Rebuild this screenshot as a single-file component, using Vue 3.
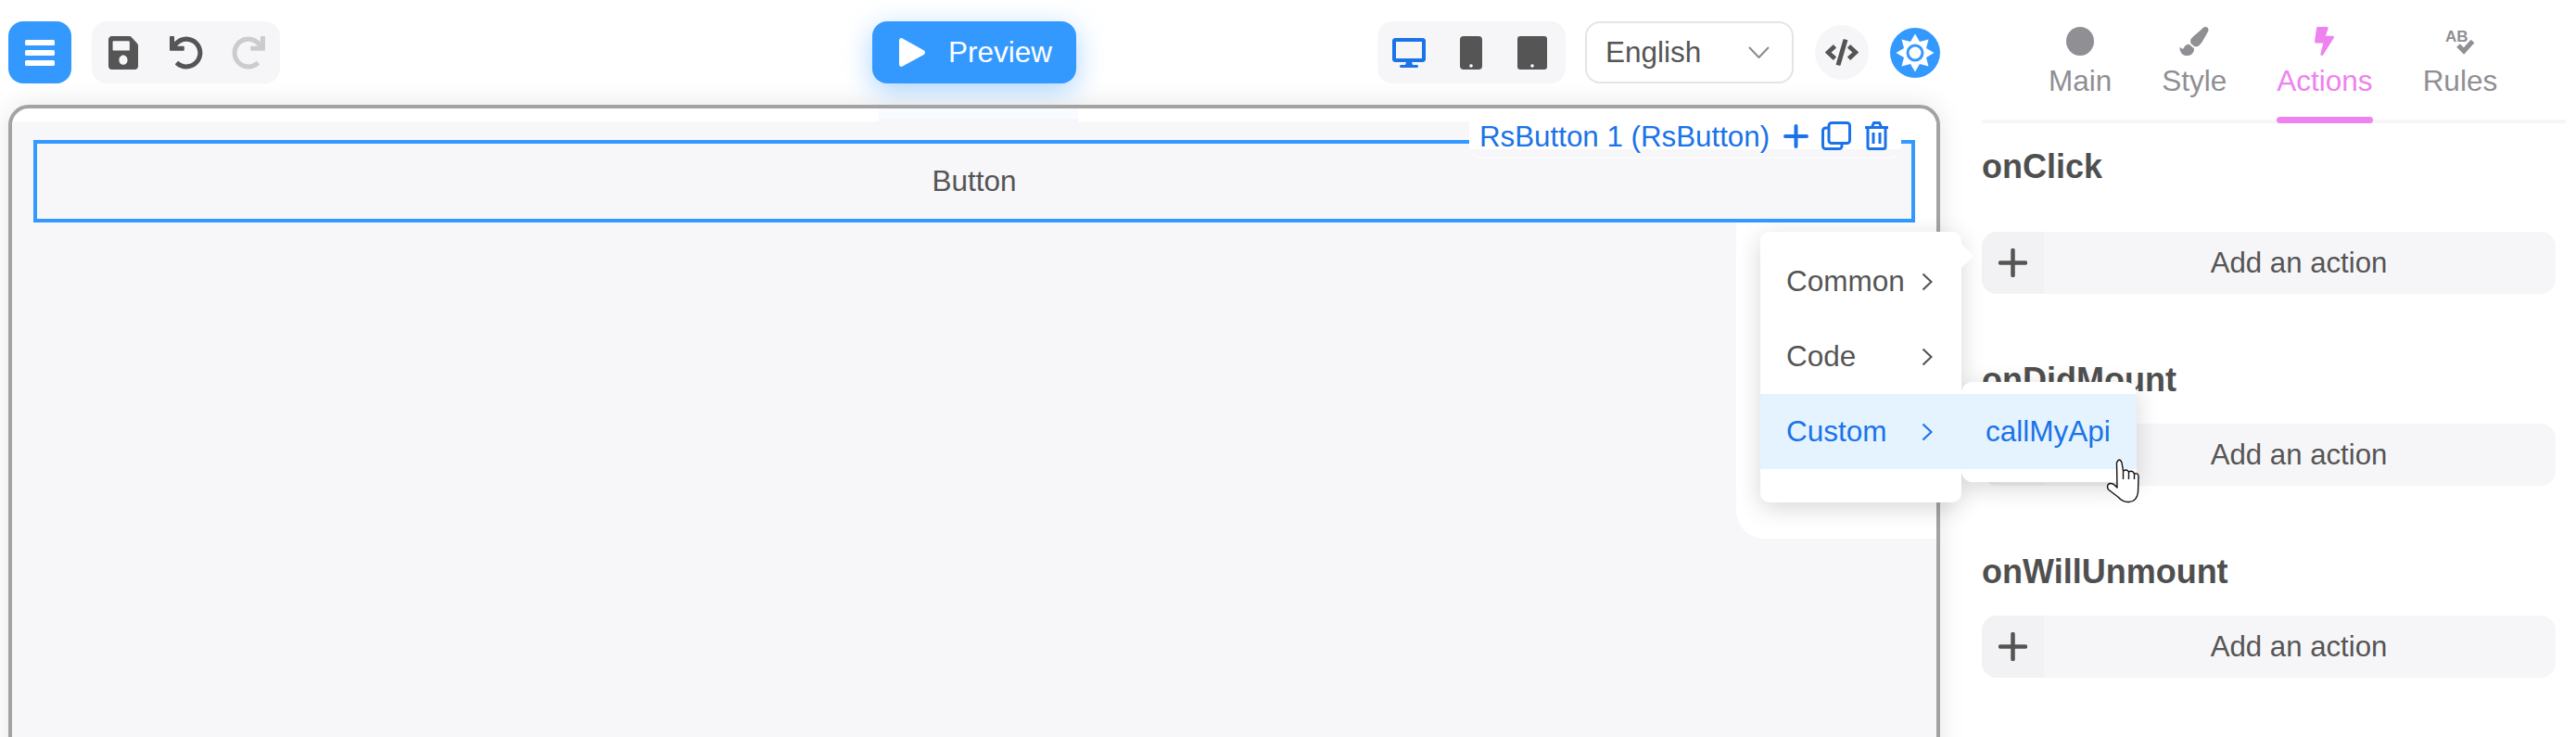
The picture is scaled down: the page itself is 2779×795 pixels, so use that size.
<script setup>
const starPoints = Array.from({ length: 16 }, (_, i) => {
  const r = i % 2 === 0 ? 20.5 : 13
  const a = (Math.PI / 8) * i - Math.PI / 2
  return `${(27 + r * Math.cos(a)).toFixed(2)},${(27 + r * Math.sin(a)).toFixed(2)}`
}).join(' ')

const tabs = ['Main', 'Style', 'Actions', 'Rules']
const sections = ['onClick', 'onDidMount', 'onWillUnmount']
const undoPath = 'M212.333 224.333H12c-6.627 0-12-5.373-12-12V12C0 5.373 5.373 0 12 0h48c6.627 0 12 5.373 12 12v78.112C117.773 39.279 184.26 7.47 258.175 8.007c136.906.994 246.448 111.623 246.157 248.532C504.041 393.258 393.12 504 256.333 504c-64.089 0-122.496-24.313-166.51-64.215-5.099-4.622-5.334-12.554-.467-17.42l33.967-33.967c4.474-4.474 11.662-4.717 16.401-.525C170.76 415.336 211.58 432 256.333 432c97.268 0 176-78.716 176-176 0-97.267-78.716-176-176-176-58.496 0-110.28 28.476-142.274 72.333h98.274c6.627 0 12 5.373 12 12v48c0 6.627-5.373 12-12 12z'
</script>

<template>
  <div class="page">
    <div class="left">
      <header class="toolbar">
        <div class="tool-start">
          <button class="menu-btn">
            <svg width="32" height="28" viewBox="0 0 32 28"><rect y="0" width="32" height="6" rx="1.5" fill="#fff"/><rect y="11" width="32" height="6" rx="1.5" fill="#fff"/><rect y="22" width="32" height="6" rx="1.5" fill="#fff"/></svg>
          </button>
          <div class="group history">
            <svg width="32" height="36" viewBox="0 32 448 448" preserveAspectRatio="none"><path fill="#555" d="M433.941 129.941l-83.882-83.882A48 48 0 0 0 316.118 32H48C21.49 32 0 53.49 0 80v352c0 26.51 21.49 48 48 48h352c26.51 0 48-21.49 48-48V163.882a48 48 0 0 0-14.059-33.941zM224 416c-35.346 0-64-28.654-64-64 0-35.346 28.654-64 64-64s64 28.654 64 64c0 35.346-28.654 64-64 64zm96-304.52V212c0 6.627-5.373 12-12 12H76c-6.627 0-12-5.373-12-12V108c0-6.627 5.373-12 12-12h228.52c3.183 0 6.235 1.264 8.485 3.515l3.48 3.48A11.996 11.996 0 0 1 320 111.48z"/></svg>
            <svg width="36" height="36" viewBox="0 0 512 512"><path fill="#555" :d="undoPath"/></svg>
            <svg width="36" height="36" viewBox="0 0 512 512"><path fill="#ccc" transform="translate(512 0) scale(-1 1)" :d="undoPath"/></svg>
          </div>
        </div>
        <button class="preview">
          <svg width="28" height="31" viewBox="0 0 28 31"><path fill="#fff" d="M0 2.5C0 .5 2 -.6 3.6.5L26.6 13.2c1.8 1.1 1.8 3.6 0 4.7L3.6 30.5C2 31.5 0 30.5 0 28.5Z"/></svg>
          <span>Preview</span>
        </button>
        <div class="tool-end">
          <div class="group devices">
            <svg width="36" height="32" viewBox="0 0 576 512"><path fill="#1a73e8" d="M528 0H48C21.5 0 0 21.5 0 48v320c0 26.5 21.5 48 48 48h192l-16 48h-72c-13.3 0-24 10.7-24 24s10.7 24 24 24h272c13.3 0 24-10.7 24-24s-10.7-24-24-24h-72l-16-48h192c26.5 0 48-21.5 48-48V48c0-26.5-21.5-48-48-48zm-16 352H64V64h448v288z"/></svg>
            <svg width="24" height="36" viewBox="0 0 24 36"><rect width="24" height="36" rx="4" fill="#555"/><circle cx="12" cy="32" r="1.8" fill="#fff"/></svg>
            <svg width="32" height="36" viewBox="0 0 32 36"><rect width="32" height="36" rx="3" fill="#555"/><circle cx="16" cy="32" r="1.8" fill="#fff"/></svg>
          </div>
          <div class="lang">
            <span>English</span>
            <svg width="23" height="13" viewBox="0 0 23 13"><path d="M1 1l10.5 11L22 1" fill="none" stroke="#8a8a8a" stroke-width="2"/></svg>
          </div>
          <div class="code-btn">
            <svg width="36" height="29" viewBox="0 0 640 512"><path fill="#555" d="M278.9 511.5l-61-17.7c-6.4-1.8-10-8.5-8.2-14.9L346.2 8.7c1.8-6.4 8.5-10 14.9-8.2l61 17.7c6.4 1.8 10 8.5 8.2 14.9L293.8 503.3c-1.9 6.4-8.5 10.1-14.9 8.2zm-114-112.2l43.5-46.4c4.6-4.9 4.3-12.7-.8-17.2L117 256l90.6-79.7c5.1-4.5 5.5-12.3.8-17.2l-43.5-46.4c-4.5-4.8-12.1-5.1-17-.5L3.8 247.2c-5.1 4.7-5.1 12.8 0 17.5l144.1 135.1c4.9 4.6 12.5 4.4 17-.5zm327.2.6l144.1-135.1c5.1-4.7 5.1-12.8 0-17.5L492.1 112.1c-4.8-4.5-12.4-4.3-17 .5L431.6 159c-4.6 4.9-4.3 12.7.8 17.2L523 256l-90.6 79.7c-5.1 4.5-5.5 12.3-.8 17.2l43.5 46.4c4.5 4.9 12.1 5.1 17 .6z"/></svg>
          </div>
          <svg class="gear" width="54" height="54" viewBox="0 0 54 54">
            <circle cx="27" cy="27" r="27" fill="#3399ff"/>
            <polygon :points="starPoints" fill="#fff"/>
            <circle cx="27" cy="27" r="8" fill="#fff" stroke="#3399ff" stroke-width="3"/>
          </svg>
        </div>
      </header>

      <section class="frame">
        <div class="canvas">
          <div class="preview-tint"></div>
          <div class="menu-glow"></div>
          <div class="selected">
            <div class="selected-label">
              <span class="label-text">RsButton 1 (RsButton)</span>
              <svg width="27" height="26" viewBox="0 0 27 26"><path d="M13.5 2v22M2 13h23" stroke="#1a73e8" stroke-width="4" stroke-linecap="round"/></svg>
              <svg width="32" height="31" viewBox="0 0 32 31" fill="none" stroke="#1a73e8" stroke-width="3"><rect x="8" y="1.5" width="22.5" height="22" rx="3"/><path d="M8 7H4.5a3 3 0 0 0-3 3v16.5a3 3 0 0 0 3 3H19a3 3 0 0 0 3-3V24"/></svg>
              <svg width="27" height="31" viewBox="0 0 27 31" fill="none" stroke="#1a73e8" stroke-width="3"><path d="M1 6.5h25M8.5 6l2-4.5h6l2 4.5M4 7v20.5a2 2 0 0 0 2 2h15a2 2 0 0 0 2-2V7M10 12v12M17 12v12"/></svg>
            </div>
            <span>Button</span>
          </div>
        </div>
      </section>
    </div>

    <aside class="panel">
      <nav class="tabs">
        <div v-for="tab in tabs" :key="tab" class="tab" :class="{ active: tab === 'Actions' }">
          <svg v-if="tab === 'Main'" width="30" height="31" viewBox="0 0 30 31"><ellipse cx="15" cy="15.5" rx="15" ry="15.5" fill="#8f8f94"/></svg>
          <svg v-else-if="tab === 'Style'" width="32" height="31" viewBox="0 0 512 512"><path fill="#8f8f94" d="M167.02 309.34c-40.12 2.58-76.53 17.86-97.19 72.3-2.35 6.21-8 9.98-14.59 9.98-11.11 0-45.46-27.67-55.25-34.35C0 439.62 37.93 512 128 512c75.86 0 128-43.77 128-120.19 0-3.11-.65-6.08-.97-9.13l-88.01-73.34zM457.89 0c-15.16 0-29.37 6.71-40.21 16.45C213.27 199.05 192 203.34 192 257.09c0 13.7 3.25 26.76 8.73 38.7l63.82 53.18c7.21 1.8 14.64 3.03 22.39 3.03 62.11 0 98.11-45.47 211.16-256.46 7.38-14.35 13.9-29.85 13.9-45.99C512 20.64 486 0 457.89 0z"/></svg>
          <svg v-else-if="tab === 'Actions'" width="21" height="31" viewBox="0 0 320 512" preserveAspectRatio="none"><path fill="#ee82ee" d="M296 160H180.6l42.6-129.8C227.2 15 215.7 0 200 0H56C44 0 33.8 8.9 32.2 20.8l-32 240C-1.7 275.2 9.5 288 24 288h118.7L96.6 482.5c-3.6 15.2 8 29.5 23.3 29.5 8.4 0 16.4-4.4 20.8-12l176-304c9.3-15.9-2.2-36-20.7-36z"/></svg>
          <svg v-else width="32" height="31" viewBox="0 0 32 31"><text x="0" y="16" font-family="Liberation Sans, sans-serif" font-weight="700" font-size="17" fill="#8f8f94">AB</text><path d="M14 20l6 6 9.5-10.5" fill="none" stroke="#8f8f94" stroke-width="5"/></svg>
          <span class="tab-name">{{ tab }}</span>
          <i class="tab-mark"></i>
        </div>
      </nav>
      <div class="sections">
        <section v-for="name in sections" :key="name" class="section" :class="{ first: name === 'onClick' }">
          <h3>{{ name }}</h3>
          <div class="add-row">
            <span class="plus-box">
              <svg width="31" height="31" viewBox="0 0 31 31"><path d="M15.5 2v27M2 15.5h27" stroke="#555" stroke-width="4.5" stroke-linecap="round"/></svg>
            </span>
            <span class="add-text">Add an action</span>
          </div>
        </section>
      </div>
    </aside>

    <div class="menu">
      <i class="menu-arrow"></i>
      <div class="menu-item">
        <span>Common</span>
        <svg width="12" height="20" viewBox="0 0 12 20"><path d="M1.5 1.5l9 8.5-9 8.5" fill="none" stroke="#555" stroke-width="2.2"/></svg>
      </div>
      <div class="menu-item">
        <span>Code</span>
        <svg width="12" height="20" viewBox="0 0 12 20"><path d="M1.5 1.5l9 8.5-9 8.5" fill="none" stroke="#555" stroke-width="2.2"/></svg>
      </div>
      <div class="menu-item on">
        <span>Custom</span>
        <svg width="12" height="20" viewBox="0 0 12 20"><path d="M1.5 1.5l9 8.5-9 8.5" fill="none" stroke="#1a73e8" stroke-width="2.2"/></svg>
      </div>
      <div class="submenu">
        <div class="menu-item on sub">callMyApi</div>
      </div>
    </div>

    <svg class="cursor" width="60" height="65" viewBox="0 0 60 65">
      <path d="M23.5 14Q26.5 8 29 14L30.5 23Q34.5 20.5 36.5 24Q40.5 22 42.5 26Q46.5 24.5 47 29L46.5 46Q45 56.5 36.5 56.5Q30 57 25.5 51.5L14.5 43Q12 38.5 16 36.5Q20 36 24 41Z" fill="#fff" stroke="#111" stroke-width="1.4" stroke-linejoin="round"/>
      <path d="M30.5 23v9M36.5 24v8M42.5 26v6" stroke="#111" stroke-width="1.4" fill="none"/>
    </svg>
  </div>
</template>

<style>
html, body { margin: 0; background: #fff; overflow: hidden; }
</style>

<style scoped>
.page {
  position: relative;
  display: flex;
  width: 2779px;
  height: 795px;
  overflow: hidden;
  background: #fff;
  font-family: "Liberation Sans", Arial, sans-serif;
  font-size: 31.5px;
  color: #555;
}
.left { width: 2084px; padding: 0 9px; flex: none; display: flex; flex-direction: column; }
.toolbar {
  height: 113px;
  box-sizing: border-box;
  padding-top: 23px;
  display: grid;
  grid-template-columns: 1fr auto 1fr;
  align-items: start;
  flex: none;
}
.tool-start, .tool-end { display: flex; align-items: center; height: 67px; }
.tool-start { gap: 22px; }
.tool-end { gap: 23px; justify-content: flex-end; }
.menu-btn {
  width: 68px; height: 67px; border: 0; padding: 0; border-radius: 16px;
  background: #3399ff; display: flex; align-items: center; justify-content: center;
}
.group {
  height: 67px; border-radius: 16px; background: #f6f6f8;
  display: flex; align-items: center; box-sizing: border-box;
}
.history { width: 203px; padding-left: 18px; gap: 34px; }
.history svg:nth-child(2) { margin-right: -3px; }
.devices { width: 203px; padding-left: 16px; gap: 37px; }
.devices svg:nth-child(2) { margin-right: 1px; }
.preview {
  position: relative; z-index: 1;
  width: 220px; height: 67px; box-sizing: border-box; border: 0; border-radius: 16px;
  padding: 0 0 0 29px; background: #3399ff; color: #fff;
  display: flex; align-items: center; gap: 25px;
  font: inherit;
  box-shadow: 0 8px 30px rgba(51, 153, 255, .42);
}
.lang {
  width: 225px; height: 67px; box-sizing: border-box; border: 2px solid #e4e4e4; border-radius: 16px;
  margin-left: -2px;
  padding: 0 24px 0 20px; display: flex; align-items: center; justify-content: space-between; background: #fff;
}
.code-btn {
  width: 58px; height: 59px; border-radius: 50%; background: #f6f6f8;
  display: flex; align-items: center; justify-content: center;
}
.gear { flex: none; }

.frame {
  position: relative; z-index: 2;
  flex: none; height: 760px; box-sizing: border-box;
  border: 4px solid #a3a3a3; border-radius: 22px;
  padding-top: 14px;
  background: #fff;
  box-shadow: 0 0 28px rgba(0, 0, 0, .1);
}
.canvas { position: relative; height: 100%; background: #f7f7fa; padding: 20px 23px; box-sizing: border-box; }
.preview-tint {
  position: absolute; left: 935px; top: -14px; width: 215px; height: 14px;
  background: linear-gradient(#f8fbff 0 11px, #f7f7fa 11px);
}
.menu-glow {
  position: absolute; left: 1860px; top: 0; width: 216px; height: 450px;
  background: #fff; border-radius: 30px 0 0 30px;
}
.selected {
  position: relative; height: 89px; box-sizing: border-box;
  border: 4px solid #3399ff; background: #f7f7fa;
  display: flex; align-items: center; justify-content: center;
}
.selected-label {
  position: absolute; right: 11px; top: -24px; height: 40px;
  width: 466px; box-sizing: border-box;
  padding: 0 13px 8px 11px;
  background: linear-gradient(#fff 0 30px, #f7f7fa 30px);
  border-bottom: 1px solid #fff;
  border-radius: 0 0 14px 14px;
  display: flex; align-items: center; color: #1a73e8;
}
.label-text { width: 328px; white-space: nowrap; font-size: 31.3px; padding-top: 3px; }
.selected-label svg:nth-of-type(2) { margin-left: 14px; }
.selected-label svg:nth-of-type(3) { margin-left: 14px; }

.panel { position: relative; flex: 1; padding-left: 36px; box-sizing: border-box; }
.tabs {
  height: 133px; box-sizing: border-box; width: 630px;
  padding-left: 72px; border-bottom: 4px solid #f6f6f8;
  display: flex; gap: 54px;
}
.tab {
  display: flex; flex-direction: column; align-items: center;
  padding-top: 29px; height: 133px; box-sizing: border-box;
  color: #8f8f94; flex: none;
}
.tab > svg { display: block; flex: none; }
.tab-name { line-height: 36px; margin-top: 9px; }
.tab-mark { display: block; width: 100%; height: 7px; border-radius: 4px; margin-top: auto; }
.tab.active { color: #ee82ee; }
.tab.active .tab-mark { background: #ee82ee; }
.sections { padding-top: 27px; width: 619px; }
.section { margin-bottom: 72.5px; }
.section h3 { margin: 0 0 27.5px; font-size: 36px; font-weight: 700; line-height: 40px; color: #4f4f4f; }
.section.first h3 { margin-bottom: 50px; }
.add-row {
  height: 67px; border-radius: 16px; background: #f6f6f8; overflow: hidden;
  display: flex; align-items: center;
}
.plus-box { width: 67px; height: 67px; background: #f2f2f4; display: flex; align-items: center; justify-content: center; flex: none; }
.add-text { flex: 1; text-align: center; font-size: 31.2px; margin-left: -2px; }

.menu {
  position: absolute; z-index: 5; left: 1899px; top: 250px; width: 217px; height: 292px;
  box-sizing: border-box; padding-top: 13px; background: #fff; border-radius: 10px;
  box-shadow: 0 6px 26px rgba(0, 0, 0, .16);
}
.menu-arrow {
  position: absolute; left: 100%; top: 13px;
  border-left: 13px solid #fff; border-top: 13px solid transparent; border-bottom: 13px solid transparent;
}
.menu-item {
  height: 81px; padding: 0 31px 0 28px; display: flex; align-items: center; justify-content: space-between;
}
.menu-item.on { background: #e5f3ff; color: #1a73e8; }
.submenu {
  position: absolute; left: 217px; top: 162px; width: 189px; height: 108px; box-sizing: border-box;
  padding-top: 13px; background: #fff; border-radius: 12px;
  box-shadow: 0 6px 26px rgba(0, 0, 0, .16);
  clip-path: inset(-40px -40px -40px 0);
}
.menu-item.sub { padding: 0 0 0 26px; justify-content: flex-start; }
.cursor { position: absolute; z-index: 6; left: 2260px; top: 485px; }
</style>
